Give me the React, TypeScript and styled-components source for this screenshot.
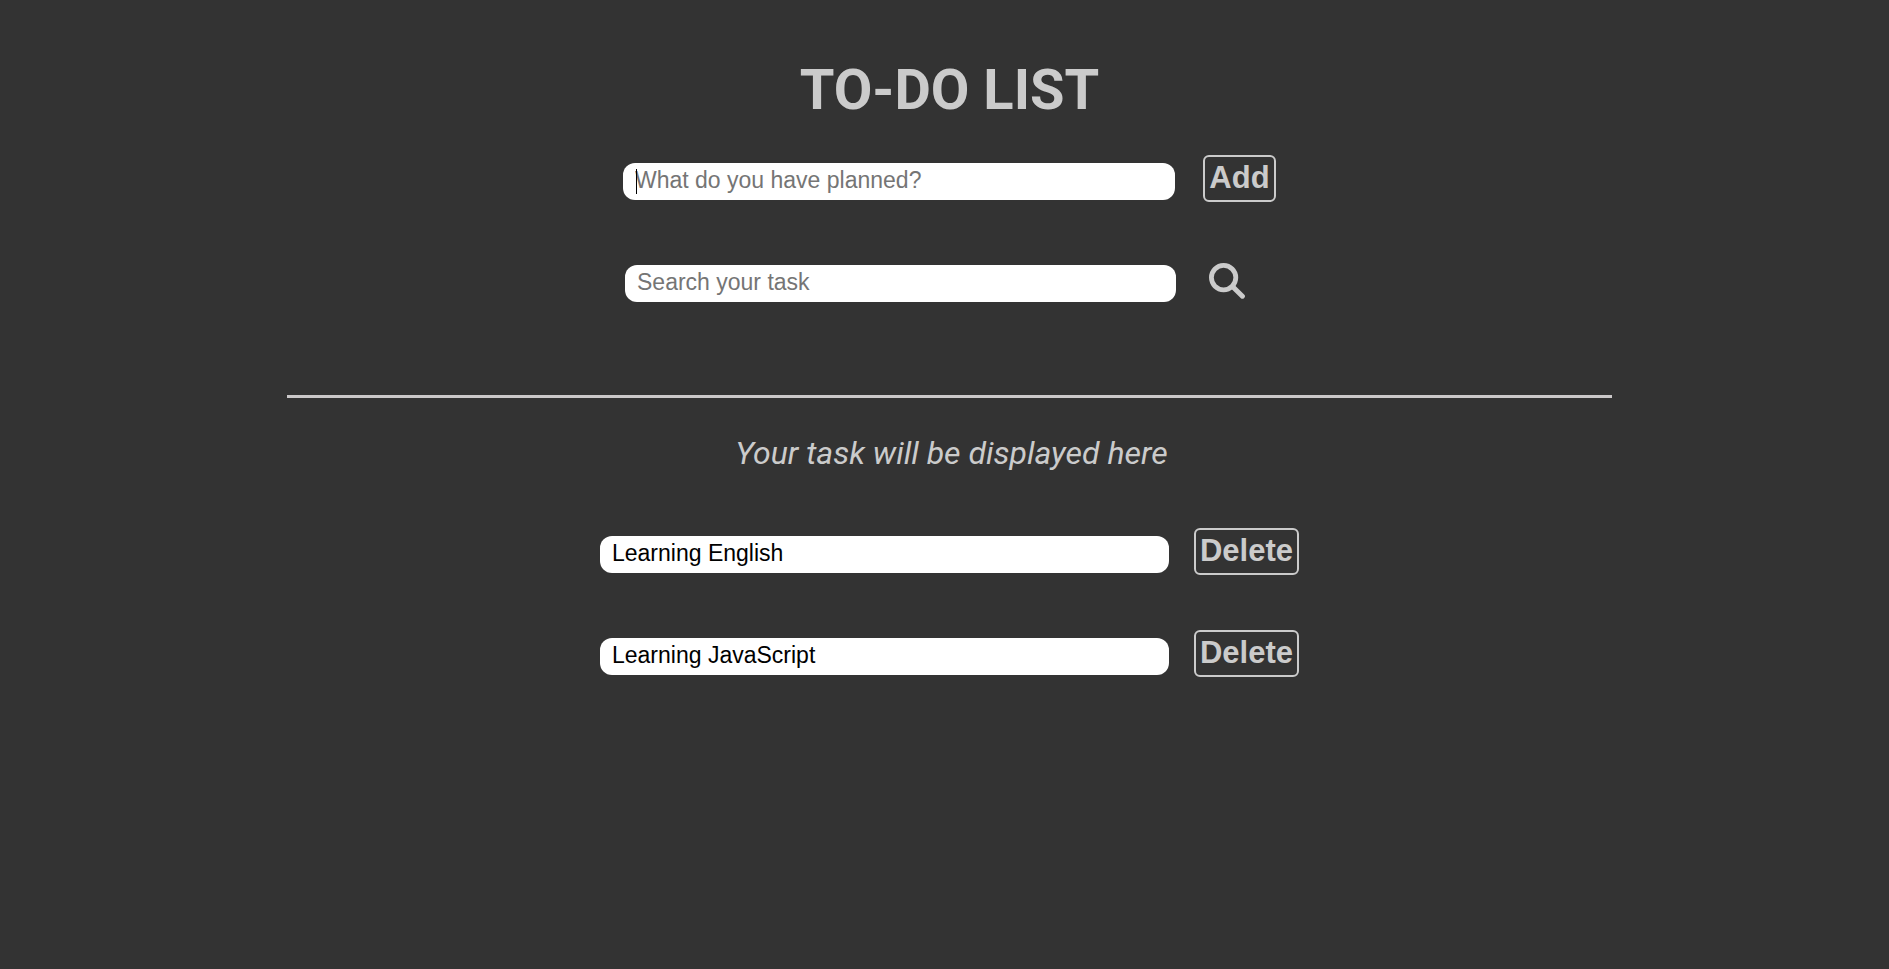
import { useState } from "react";
import type { FormEvent } from "react";
import styled, { createGlobalStyle } from "styled-components";

const INK = "#cbcbcb";

const GlobalStyle = createGlobalStyle`
  * { box-sizing: border-box; }
  body {
    margin: 0;
    background: #333333;
    color: ${INK};
    font-family: Roboto, "Liberation Sans", sans-serif;
  }
`;

const Page = styled.main`
  display: flex;
  flex-direction: column;
  align-items: center;
  padding: 57px 0 57px 10px;
`;

const Title = styled.h1`
  margin: 0;
  font-size: 56px;
  line-height: 66px;
  font-weight: 700;
`;

const Forms = styled.section`
  display: flex;
  flex-direction: column;
  align-items: center;
  gap: 55px;
  width: 100%;
  margin-top: 32px;
`;

const Row = styled.form<{ $width: number; $gap: number }>`
  display: flex;
  align-items: flex-end;
  gap: ${(p) => p.$gap}px;
  width: ${(p) => p.$width}px;
  max-width: 100%;
  height: 47px;
`;

const Field = styled.div`
  position: relative;
  flex: 1;
  min-width: 0;
  margin-bottom: 2px;
`;

const TextBox = styled.input`
  display: block;
  width: 100%;
  height: 37px;
  padding: 0 12px 2px;
  border: 0;
  border-radius: 12px;
  outline: none;
  background: #ffffff;
  color: #000000;
  font-family: "Liberation Sans", Arial, sans-serif;
  font-size: 23px;

  &::placeholder {
    color: #757575;
    opacity: 1;
  }
`;

const Caret = styled.span`
  position: absolute;
  top: 6px;
  left: 13px;
  width: 1px;
  height: 25px;
  background: #000000;
`;

const OutlineButton = styled.button`
  flex: none;
  min-width: 73px;
  height: 47px;
  padding: 0 4px 2px;
  border: 2px solid ${INK};
  border-radius: 6px;
  background: transparent;
  color: ${INK};
  font-family: "Liberation Sans", Arial, sans-serif;
  font-size: 31px;
  font-weight: 700;
  cursor: pointer;
`;

const IconButton = styled.button`
  display: flex;
  align-items: center;
  flex: none;
  width: 70px;
  height: 47px;
  padding: 0 5px;
  border: 0;
  background: transparent;
  color: ${INK};
  cursor: pointer;
`;

const Divider = styled.hr`
  box-sizing: content-box;
  width: 70vw;
  height: 1px;
  margin: 91px 0 0;
  border: 1px solid #cbc8c9;
  background: #cbc8c9;
`;

const Subtitle = styled.h2`
  margin: 36px 0 0;
  padding-left: 4px;
  font-size: 32px;
  line-height: 38px;
  font-style: italic;
  font-weight: 400;
`;

const Tasks = styled(Forms)`
  margin-top: 56px;
`;

function SearchIcon() {
  return (
    <svg width="36" height="36" viewBox="0 0 36 36" fill="none" stroke="currentColor" aria-hidden="true">
      <circle cx="14.6" cy="14.6" r="12.2" strokeWidth="4.8" />
      <path d="M23.5 23.5 33.4 33.2" strokeWidth="5" strokeLinecap="round" />
    </svg>
  );
}

export default function App() {
  const [draft, setDraft] = useState("");
  const [query, setQuery] = useState("");
  const [tasks, setTasks] = useState(["Learning English", "Learning JavaScript"]);

  const addTask = (event: FormEvent) => {
    event.preventDefault();
    if (draft.trim()) {
      setTasks([...tasks, draft.trim()]);
      setDraft("");
    }
  };

  const shown = tasks.filter((task) => task.toLowerCase().includes(query.toLowerCase()));

  return (
    <>
      <GlobalStyle />
      <Page>
        <Title>TO-DO LIST</Title>
        <Forms>
          <Row $width={653} $gap={28} onSubmit={addTask}>
            <Field>
              <TextBox
                aria-label="New task"
                placeholder="What do you have planned?"
                value={draft}
                onChange={(e) => setDraft(e.target.value)}
              />
              {draft === "" && <Caret />}
            </Field>
            <OutlineButton type="submit">Add</OutlineButton>
          </Row>
          <Row $width={649} $gap={28} onSubmit={(e: FormEvent) => e.preventDefault()}>
            <Field>
              <TextBox
                aria-label="Search"
                placeholder="Search your task"
                value={query}
                onChange={(e) => setQuery(e.target.value)}
              />
            </Field>
            <IconButton type="submit" aria-label="Search">
              <SearchIcon />
            </IconButton>
          </Row>
        </Forms>
        <Divider />
        <Subtitle>Your task will be displayed here</Subtitle>
        <Tasks>
          {shown.map((task) => (
            <Row key={task} as="div" $width={699} $gap={25}>
              <Field>
                <TextBox aria-label="Task" value={task} readOnly />
              </Field>
              <OutlineButton type="button" onClick={() => setTasks(tasks.filter((t) => t !== task))}>
                Delete
              </OutlineButton>
            </Row>
          ))}
        </Tasks>
      </Page>
    </>
  );
}
